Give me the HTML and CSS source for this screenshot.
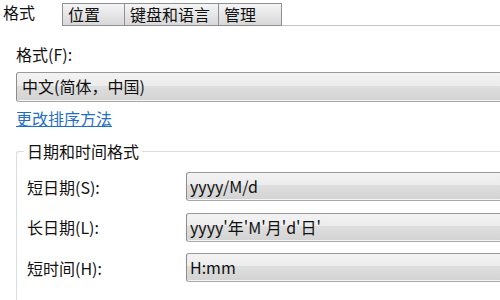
FILE: index.html
```html
<!DOCTYPE html>
<html lang="zh-CN">
<head>
<meta charset="utf-8">
<link rel="stylesheet" href="styles.css">
</head>
<body>
<div class="page">
  <div class="tabs">
    <div class="tab active">格式</div>
    <div class="tab w62">位置</div>
    <div class="tab w92">键盘和语言</div>
    <div class="tab w62">管理</div>
    <div class="tab-fill"></div>
  </div>
  <div class="content">
    <div class="label">格式(F):</div>
    <div class="combo main-combo">中文(简体，中国)</div>
    <a class="link" href="#">更改排序方法</a>
    <div class="group">
      <div class="legend">日期和时间格式</div>
      <div class="row">
        <div class="row-label">短日期(S):</div>
        <div class="combo">yyyy/M/d</div>
      </div>
      <div class="row">
        <div class="row-label">长日期(L):</div>
        <div class="combo">yyyy'年'M'月'd'日'</div>
      </div>
      <div class="row">
        <div class="row-label">短时间(H):</div>
        <div class="combo">H:mm</div>
      </div>
    </div>
  </div>
</div>
</body>
</html>
```
FILE: styles.css
```css
html, body {
  margin: 0;
  padding: 0;
  background: #ffffff;
  overflow: hidden;
  width: 500px;
  height: 300px;
}
.page {
  width: 500px;
  height: 300px;
  overflow: hidden;
  font-family: "Noto Sans CJK SC", "Noto Sans", sans-serif;
  font-size: 16px;
  color: #111111;
  text-spacing-trim: space-all;
}
.tabs {
  display: flex;
  align-items: flex-end;
  height: 26px;
}
.tab {
  box-sizing: border-box;
  height: 23px;
  border: 1px solid #8d9097;
  border-left: none;
  background: linear-gradient(#f5f5f5, #e6e6e6 50%, #d8d8d8);
  font-size: 16px;
  line-height: 20px;
  padding-left: 5px;
  color: #111;
}
.tab.w62 { width: 63px; }
.tab.w92 { width: 94px; }
.tab:nth-child(2) { border-left: 1px solid #8d9097; }
.tab.active {
  width: 62px;
  height: 26px;
  border: none;
  background: #ffffff;
  padding-left: 3px;
  line-height: 24px;
}
.tab-fill {
  flex: 1;
  height: 1px;
  background: #c4c6cb;
}
.content {
  padding-left: 16px;
}
.label {
  margin-top: 19px;
  height: 18px;
  line-height: 18px;
}
.combo {
  box-sizing: border-box;
  height: 30px;
  border: 1px solid #8c8c8c;
  border-top-color: #9a9a9a;
  border-bottom-color: #a8a8a8;
  border-radius: 3px 0 0 3px;
  border-right: none;
  background: linear-gradient(#f3f3f3, #ececec 45%, #dedede 46%, #d3d3d3);
  box-shadow: inset 0 -1px 0 #f5f5f5;
  padding-left: 5px;
  line-height: 27px;
  width: 600px;
}
.main-combo {
  margin-top: 9px;
}
.link {
  display: block;
  margin-top: 7px;
  width: max-content;
  color: #1f6fc8;
  text-decoration: underline;
  line-height: 18px;
}
.group {
  position: relative;
  margin-top: 24px;
  height: 200px;
  border: 1px solid #d6dde3;
  border-right: none;
  border-radius: 3px 0 0 3px;
  padding-top: 20px;
  padding-left: 10px;
  display: flex;
  flex-direction: column;
  gap: 11.5px;
}
.legend {
  position: absolute;
  top: -10px;
  left: 7px;
  background: #ffffff;
  padding: 0 3px;
  line-height: 18px;
}
.row {
  display: grid;
  grid-template-columns: 159px 1fr;
  align-items: center;
}
.row .combo {
  height: 29px;
  line-height: 26px;
  padding-left: 3px;
}
.row-label {
  line-height: 18px;
}
```
